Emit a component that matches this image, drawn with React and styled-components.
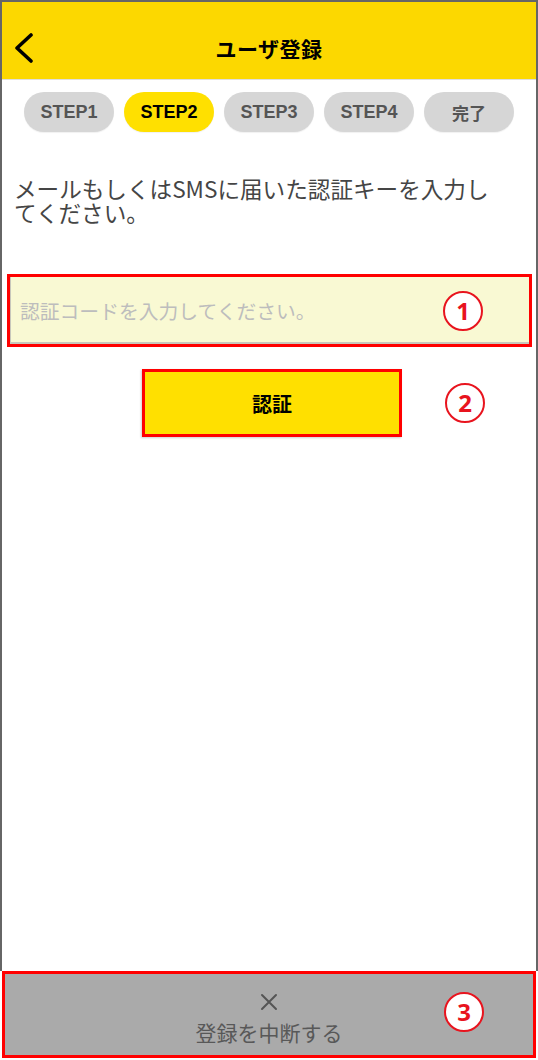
import React from "react";
import styled, { createGlobalStyle } from "styled-components";

const GlobalStyle = createGlobalStyle`
  html, body { margin: 0; padding: 0; background: #ffffff; }
  body { font-family: "Noto Sans CJK JP", "Noto Sans", sans-serif; }
  * { box-sizing: border-box; }
`;

const Page = styled.div`
  width: 538px;
  height: 1060px;
  display: flex;
  flex-direction: column;
  background: #ffffff;
`;

const Screen = styled.div`
  flex: 1;
  display: flex;
  flex-direction: column;
  border: 2px solid #666666;
  border-bottom: none;
`;

const Header = styled.header`
  height: 78px;
  padding-top: 14px;
  background: #fcd800;
  border-bottom: 1px solid #dedede;
  display: grid;
  grid-template-columns: 60px 1fr 60px;
  align-items: center;
`;

const BackButton = styled.button`
  border: none;
  background: none;
  padding: 0 0 0 12px;
  display: flex;
  align-items: center;
  height: 40px;
  cursor: pointer;
`;

const Title = styled.h1`
  margin: 0;
  text-align: center;
  font-size: 21px;
  font-weight: 700;
  color: #000000;
  letter-spacing: 0.5px;
`;

const Steps = styled.nav`
  display: flex;
  justify-content: center;
  gap: 10px;
  margin-top: 12px;
`;

const StepPill = styled.div`
  width: 90px;
  height: 40px;
  border-radius: 20px;
  display: flex;
  align-items: center;
  justify-content: center;
  background: ${(p) => (p.$active ? "#ffe000" : "#d6d6d6")};
  color: ${(p) => (p.$active ? "#000000" : "#555555")};
  font-family: ${(p) =>
    p.$cjk
      ? `"Noto Sans CJK JP", sans-serif`
      : `"Liberation Sans", "Noto Sans CJK JP", sans-serif`};
  font-size: ${(p) => (p.$cjk ? "17px" : "18px")};
  font-weight: 700;
  line-height: 1;
  box-shadow: 0 1px 1px rgba(0, 0, 0, 0.06);
`;

const Description = styled.p`
  margin: 45px 0 0;
  padding: 0 26px 0 12px;
  font-size: 22.6px;
  line-height: 24px;
  color: #454545;
`;

const InputBox = styled.div`
  position: relative;
  margin: 49px 4px 0 5px;
  height: 73px;
  border: 3px solid #ff0000;
  background: #f9f9d3;
  box-shadow: inset 1px -2px 0 #c8c8bb;
  display: flex;
  align-items: center;
`;

const CodeInput = styled.input`
  flex: 1;
  height: 100%;
  border: none;
  background: transparent;
  padding: 0 10px;
  font-family: "Noto Sans CJK JP", sans-serif;
  font-size: 19.8px;
  color: #333333;
  outline: none;
  &::placeholder { color: #bdbdbd; }
`;

const ButtonRow = styled.div`
  position: relative;
  margin-top: 22px;
  display: flex;
`;

const VerifyButton = styled.button`
  margin-left: 140px;
  width: 260px;
  height: 68px;
  border: 3px solid #ff0000;
  background: #ffe000;
  font-family: "Noto Sans CJK JP", sans-serif;
  font-size: 20px;
  font-weight: 700;
  color: #000000;
  cursor: pointer;
  box-shadow: -1px 1px 2px rgba(0, 0, 0, 0.2);
`;

const Badge = styled.span`
  position: absolute;
  right: ${(p) => p.$right}px;
  top: ${(p) => (p.$top != null ? `${p.$top}px` : "50%")};
  transform: ${(p) => (p.$top != null ? "none" : "translateY(-50%)")};
  width: 40px;
  height: 40px;
  border-radius: 50%;
  border: 2.5px solid #e8141e;
  background: #ffffff;
  color: #e8141e;
  display: flex;
  align-items: center;
  justify-content: center;
  font-family: "Noto Sans", "Liberation Sans", sans-serif;
  font-size: 24px;
  font-weight: 700;
  line-height: 1;
`;

const CancelBar = styled.button`
  position: relative;
  margin: 0 2px 2px 2px;
  height: 87px;
  border: 3px solid #ff0000;
  background: #aaaaaa;
  display: flex;
  flex-direction: column;
  align-items: center;
  padding: 19px 0 0;
  gap: 8px;
  cursor: pointer;
`;

const CancelLabel = styled.span`
  font-family: "Noto Sans CJK JP", sans-serif;
  font-size: 21px;
  line-height: 26px;
  color: #585858;
`;

const steps = ["STEP1", "STEP2", "STEP3", "STEP4", "完了"];

export default function App() {
  return (
    <>
      <GlobalStyle />
      <Page>
        <Screen>
          <Header>
            <BackButton aria-label="戻る">
              <svg width="20" height="30" viewBox="0 0 20 30">
                <polyline
                  points="17,2 3,15 17,28"
                  fill="none"
                  stroke="#000"
                  strokeWidth="3.6"
                  strokeLinecap="round"
                  strokeLinejoin="round"
                />
              </svg>
            </BackButton>
            <Title>ユーザ登録</Title>
            <span />
          </Header>
          <Steps>
            {steps.map((s) => (
              <StepPill key={s} $active={s === "STEP2"} $cjk={s === "完了"}>
                {s}
              </StepPill>
            ))}
          </Steps>
          <Description>
            メールもしくはSMSに届いた認証キーを入力してください。
          </Description>
          <InputBox>
            <CodeInput placeholder="認証コードを入力してください。" />
            <Badge $right={46}>1</Badge>
          </InputBox>
          <ButtonRow>
            <VerifyButton>認証</VerifyButton>
            <Badge $right={51}>2</Badge>
          </ButtonRow>
        </Screen>
        <CancelBar>
          <svg width="18" height="18" viewBox="0 0 18 18">
            <path
              d="M2 2 L16 16 M16 2 L2 16"
              stroke="#555"
              strokeWidth="2"
              strokeLinecap="round"
            />
          </svg>
          <CancelLabel>登録を中断する</CancelLabel>
          <Badge $right={49} $top={18}>3</Badge>
        </CancelBar>
      </Page>
    </>
  );
}
